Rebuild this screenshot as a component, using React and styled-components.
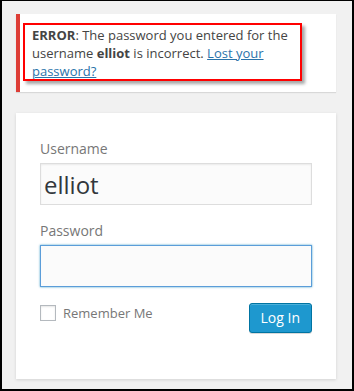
import styled, { createGlobalStyle } from "styled-components";

const GlobalStyle = createGlobalStyle`
  html, body {
    margin: 0;
    padding: 0;
    background: #fff;
  }
  * {
    box-sizing: border-box;
  }
`;

const Frame = styled.div`
  width: 354px;
  height: 391px;
  border: 2px solid #000;
  border-top-width: 1px;
  background: #f1f1f1;
  padding: 13px 16px 0 14px;
  font-family: "Open Sans", "Noto Sans", sans-serif;
  font-size: 13px;
  color: #444;
`;

const Notice = styled.div`
  position: relative;
  background: #fff;
  border-left: 4px solid #dd3d36;
  padding: 12px;
  line-height: 18px;
  box-shadow: 0 1px 1px 0 rgba(0, 0, 0, 0.1);
  margin-bottom: 21px;
`;

const Highlight = styled.div`
  position: absolute;
  left: 3px;
  top: 9px;
  width: 279px;
  height: 58px;
  border: 2px solid #f00;
  box-shadow: 3px 3px 3px rgba(0, 0, 0, 0.35);
  pointer-events: none;
`;

const Link = styled.a`
  color: #2a73aa;
  text-decoration: underline;
`;

const Form = styled.form`
  background: #fff;
  padding: 26px 24px 46px;
  box-shadow: 0 1px 3px rgba(0, 0, 0, 0.13);
`;

const Label = styled.label`
  display: block;
  font-size: 14px;
  line-height: 20px;
  color: #777;
`;

const Input = styled.input`
  display: block;
  width: 100%;
  height: 42px;
  margin: 4px 0 ${(p) => (p.$last ? "0" : "16px")};
  padding: 3px;
  font-family: "Open Sans", "Noto Sans", sans-serif;
  font-size: 24px;
  color: #32373c;
  background: #fbfbfb;
  border: 1px solid ${(p) => (p.$focus ? "#5b9dd9" : "#ddd")};
  box-shadow: ${(p) =>
    p.$focus ? "0 0 2px rgba(30, 140, 190, 0.8)" : "inset 0 1px 2px rgba(0,0,0,0.07)"};
  outline: none;
`;

const Row = styled.div`
  display: flex;
  justify-content: space-between;
  align-items: flex-start;
  margin-top: 16px;
`;

const Remember = styled.label`
  display: flex;
  align-items: center;
  gap: 7px;
  margin-top: 2px;
  font-size: 13px;
  line-height: 16px;
  color: #777;
`;

const Checkbox = styled.span`
  display: inline-block;
  width: 16px;
  height: 16px;
  border: 1px solid #b4b9be;
  background: #fff;
  box-shadow: inset 0 1px 2px rgba(0, 0, 0, 0.1);
`;

const Button = styled.button`
  height: 30px;
  padding: 0 11px 2px;
  font-family: "Open Sans", "Noto Sans", sans-serif;
  font-size: 14px;
  line-height: 28px;
  color: #fff;
  background: #1e98cf;
  border: 1px solid #0074a2;
  border-radius: 3px;
  box-shadow: inset 0 1px 0 rgba(120, 200, 230, 0.5), 0 1px 0 rgba(0, 0, 0, 0.15);
`;

export default function App() {
  return (
    <>
      <GlobalStyle />
      <Frame>
        <Notice>
          <strong>ERROR</strong>: The password you entered for the username{" "}
          <strong>elliot</strong> is incorrect. <Link href="#">Lost your password?</Link>
          <Highlight />
        </Notice>
        <Form onSubmit={(e) => e.preventDefault()}>
          <Label>Username</Label>
          <Input defaultValue="elliot" />
          <Label>Password</Label>
          <Input type="password" $focus $last />
          <Row>
            <Remember>
              <Checkbox />
              Remember Me
            </Remember>
            <Button type="submit">Log In</Button>
          </Row>
        </Form>
      </Frame>
    </>
  );
}
